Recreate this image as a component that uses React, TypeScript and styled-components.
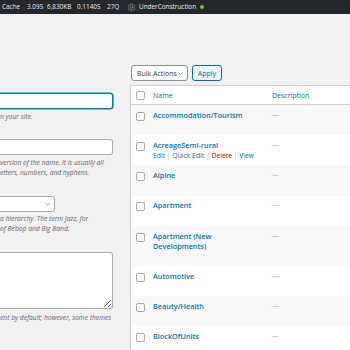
import React from "react";
import styled, { createGlobalStyle } from "styled-components";
import { Settings, ChevronDown } from "lucide-react";

const GlobalStyle = createGlobalStyle`
	html, body {
		margin: 0;
		padding: 0;
	}
	body {
		width: 350px;
		height: 350px;
		overflow: hidden;
		background: #f1f1f1;
		color: #444;
		font-family: "Open Sans", "Noto Sans", sans-serif;
	}
`;

const AdminBar = styled.div`
	height: 14px;
	background: #23282d;
	display: flex;
	align-items: center;
	padding-left: 2px;
	color: #eee;
	font-size: 6.4px;
	white-space: nowrap;
`;

const BarItem = styled.span<{ $w: number }>`
	flex: none;
	width: ${(p) => p.$w}px;
	display: flex;
	align-items: center;
	line-height: 14px;
`;

const BarIcon = styled(BarItem)`
	color: #a0a5aa;
`;

const StatusDot = styled.span`
	width: 4px;
	height: 4px;
	border-radius: 50%;
	background: #76c42f;
`;

const Columns = styled.div`
	display: flex;
	align-items: flex-start;
`;

const FormColumn = styled.div`
	width: 114px;
	flex: none;
	padding-top: 79px;
`;

const Field = styled.div<{ $top: number }>`
	margin-top: ${(p) => p.$top}px;
`;

const TextInput = styled.input<{ $focus?: boolean }>`
	display: block;
	box-sizing: border-box;
	width: 113px;
	height: 16px;
	margin: 0;
	background: #fff;
	border: 1px solid ${(p) => (p.$focus ? "#007cba" : "#a7aaad")};
	border-left: none;
	border-radius: 0 3px 3px 0;
	box-shadow: ${(p) => (p.$focus ? "0 0 0 0.6px #007cba" : "none")};
	outline: none;
`;

const SelectBox = styled.div<{ $width: number }>`
	box-sizing: border-box;
	width: ${(p) => p.$width}px;
	height: 16px;
	display: flex;
	align-items: center;
	justify-content: space-between;
	padding: 0 3px 0 5px;
	background: #fff;
	border: 1px solid #8c8f94;
	border-radius: 3px;
	color: #32373c;
	font-size: 7px;
	svg {
		color: #555;
	}
`;

const ParentSelect = styled(SelectBox)`
	border-left: none;
	border-radius: 0 3px 3px 0;
	border-color: #a7aaad;
`;

const TextArea = styled.textarea`
	display: block;
	box-sizing: border-box;
	width: 113px;
	height: 57px;
	margin: 0;
	background: #fff;
	border: 1px solid #a7aaad;
	border-left: none;
	border-radius: 0 3px 3px 0;
	outline: none;
`;

const Description = styled.p<{ $top: number }>`
	margin: ${(p) => p.$top}px 0 0;
	color: #666;
	font-size: 6.7px;
	font-style: italic;
	line-height: 10px;
	white-space: nowrap;
`;

const ListColumn = styled.div`
	margin-left: 16px;
	padding-top: 51px;
`;

const Toolbar = styled.div`
	display: flex;
	gap: 4px;
	margin-left: 1px;
`;

const ApplyButton = styled.div`
	box-sizing: border-box;
	width: 30px;
	height: 16px;
	display: flex;
	align-items: center;
	justify-content: center;
	background: #f3f5f6;
	border: 1px solid #0071a1;
	border-radius: 3px;
	color: #0071a1;
	font-size: 7px;
`;

const Table = styled.div`
	width: 260px;
	margin-top: 4px;
	background: #fff;
	border: 1px solid #ccd0d4;
`;

const Row = styled.div<{ $alt?: boolean; $head?: boolean }>`
	display: grid;
	grid-template-columns: 22px 119px 1fr;
	padding: ${(p) => (p.$head ? "5px 0 4px" : "4.8px 0 3.4px")};
	background: ${(p) => (p.$alt ? "#f9f9f9" : "#fff")};
	border-bottom: ${(p) => (p.$head ? "1px solid #ccd0d4" : "none")};
`;

const Check = styled.span<{ $top: number }>`
	box-sizing: border-box;
	width: 9px;
	height: 9px;
	margin: ${(p) => p.$top}px 0 0 5px;
	background: #fff;
	border: 1px solid #a7aaad;
	border-radius: 2px;
`;

const HeadLink = styled.span`
	color: #0073aa;
	font-size: 7px;
	line-height: 9px;
`;

const NameCell = styled.div`
	padding-right: 19px;
`;

const Title = styled.div`
	color: #0073aa;
	font-size: 7.3px;
	font-weight: 600;
	line-height: 10px;
`;

const Actions = styled.div<{ $show?: boolean }>`
	visibility: ${(p) => (p.$show ? "visible" : "hidden")};
	font-size: 6.8px;
	line-height: 12px;
	color: #a0a5aa;
	white-space: nowrap;
`;

const ActionLink = styled.span<{ $danger?: boolean }>`
	color: ${(p) => (p.$danger ? "#a00" : "#0073aa")};
`;

const Dash = styled.span`
	color: #a0a5aa;
	font-size: 7px;
	line-height: 10px;
`;

const terms = [
	"Accommodation/Tourism",
	"AcreageSemi-rural",
	"Alpine",
	"Apartment",
	"Apartment (New Developments)",
	"Automotive",
	"Beauty/Health",
	"BlockOfUnits",
];

export default function App() {
	return (
		<>
			<GlobalStyle />
			<AdminBar>
				<BarItem $w={25}>Cache</BarItem>
				<BarItem $w={20}>3.09S</BarItem>
				<BarItem $w={30}>6,830KB</BarItem>
				<BarItem $w={30}>0.1140S</BarItem>
				<BarItem $w={20}>27Q</BarItem>
				<BarIcon $w={12}>
					<Settings size={9} strokeWidth={1.6} />
				</BarIcon>
				<BarItem $w={61}>UnderConstruction</BarItem>
				<StatusDot />
			</AdminBar>
			<Columns>
				<FormColumn>
					<Field $top={0}>
						<TextInput $focus />
						<Description $top={3}>n your site.</Description>
					</Field>
					<Field $top={17}>
						<TextInput />
						<Description $top={3}>
							version of the name. It is usually all
							<br />
							etters, numbers, and hyphens.
						</Description>
					</Field>
					<Field $top={18}>
						<ParentSelect $width={55}>
							<span />
							<ChevronDown size={7} strokeWidth={2} />
						</ParentSelect>
						<Description $top={2}>
							a hierarchy. The term Jazz, for
							<br />
							of Bebop and Big Band.
						</Description>
					</Field>
					<Field $top={18}>
						<TextArea />
						<Description $top={4}>ent by default; however, some themes</Description>
					</Field>
				</FormColumn>
				<ListColumn>
					<Toolbar>
						<SelectBox $width={57}>
							<span>Bulk Actions</span>
							<ChevronDown size={7} strokeWidth={2} />
						</SelectBox>
						<ApplyButton>Apply</ApplyButton>
					</Toolbar>
					<Table>
						<Row $head>
							<Check $top={0} />
							<HeadLink>Name</HeadLink>
							<HeadLink>Description</HeadLink>
						</Row>
						{terms.map((term, i) => (
							<Row key={term} $alt={i % 2 === 0}>
								<Check $top={2} />
								<NameCell>
									<Title>{term}</Title>
									<Actions $show={i === 1}>
										<ActionLink>Edit</ActionLink> | <ActionLink>Quick Edit</ActionLink> |{" "}
										<ActionLink $danger>Delete</ActionLink> | <ActionLink>View</ActionLink>
									</Actions>
								</NameCell>
								<Dash>—</Dash>
							</Row>
						))}
					</Table>
				</ListColumn>
			</Columns>
		</>
	);
}
